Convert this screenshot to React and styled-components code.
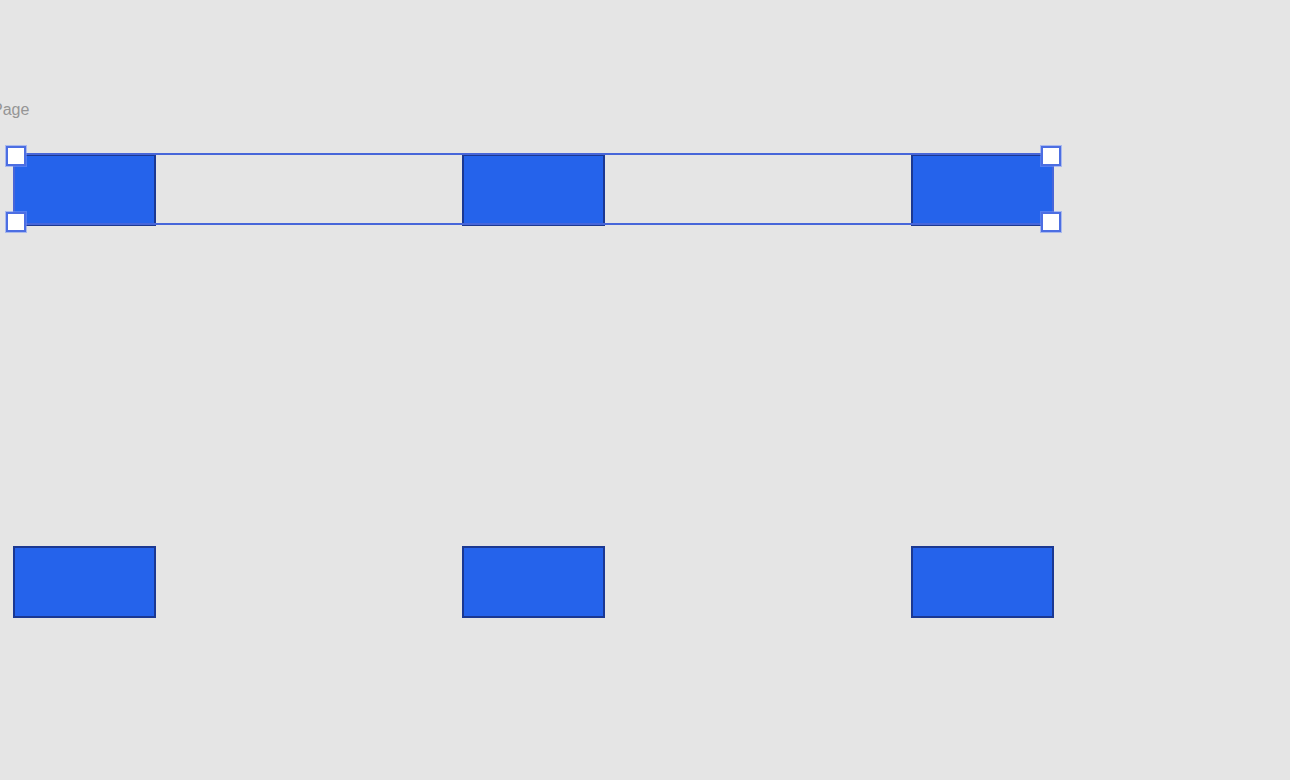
import React from "react";
import styled, { createGlobalStyle } from "styled-components";

const Global = createGlobalStyle`
  html, body { margin: 0; padding: 0; background: #e5e5e5; }
  body { font-family: "Liberation Sans", Arial, sans-serif; overflow: hidden; }
`;

const Canvas = styled.div`
  width: 1290px;
  height: 780px;
  box-sizing: border-box;
  background: #e5e5e5;
  overflow: hidden;
  padding: 101px 0 0 13px;
  display: flex;
  flex-direction: column;
`;

const PageLabel = styled.div`
  margin-left: -21px;
  font-size: 16px;
  line-height: 18px;
  color: #959595;
  white-space: nowrap;
`;

const Row = styled.div`
  position: relative;
  display: flex;
  gap: 306px;
  width: 1041px;
  margin-top: ${(p) => p.$top}px;
`;

const Node = styled.div`
  box-sizing: border-box;
  flex: 0 0 143px;
  height: 72px;
  background: #2563eb;
  border: 2px solid #1b3892;
`;

const Selection = styled.div`
  position: absolute;
  inset: -1px 0 1px 0;
  box-sizing: border-box;
  border: 2px solid #4766d9;
  pointer-events: none;
`;

const Handle = styled.div`
  position: absolute;
  box-sizing: border-box;
  width: 20px;
  height: 20px;
  background: #ffffff;
  border: 2px solid #4c6ee2;
  box-shadow: 0 0 0 1px rgba(120, 150, 245, 0.55);
  ${(p) => (p.$right ? "right: -7px;" : "left: -7px;")}
  ${(p) => (p.$bottom ? "bottom: -6px;" : "top: -8px;")}
`;

const nodes = ["a", "b", "c"];

export default function App() {
  return (
    <>
      <Global />
      <Canvas>
        <PageLabel>Page</PageLabel>
        <Row $top={35}>
          {nodes.map((n) => (
            <Node key={n} />
          ))}
          <Selection />
          <Handle />
          <Handle $bottom />
          <Handle $right />
          <Handle $right $bottom />
        </Row>
        <Row $top={320}>
          {nodes.map((n) => (
            <Node key={n} />
          ))}
        </Row>
      </Canvas>
    </>
  );
}
